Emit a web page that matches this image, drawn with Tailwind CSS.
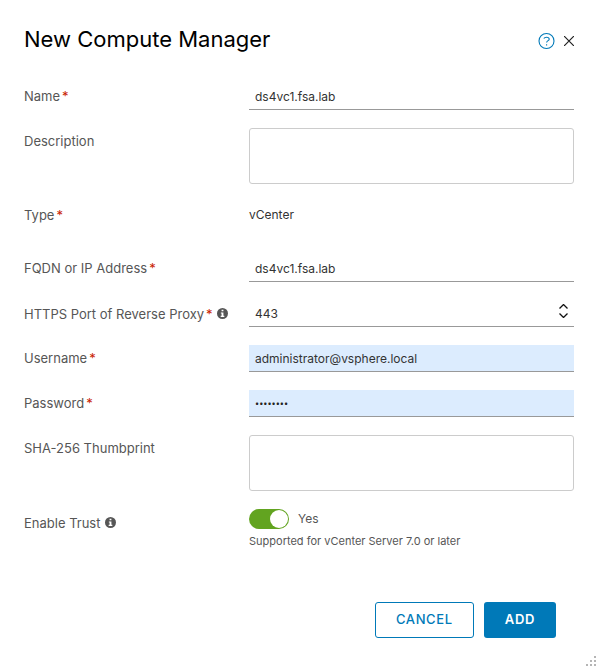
<!DOCTYPE html>
<html lang="en">
<head>
<meta charset="utf-8">
<meta name="viewport" content="width=device-width, initial-scale=1">
<title>New Compute Manager</title>
<script src="https://cdn.jsdelivr.net/npm/@tailwindcss/browser@4"></script>
</head>
<body class="bg-white font-['Inter',sans-serif] text-[13px] text-[#565656]">
<main class="relative flex min-h-screen flex-col px-6 pt-6 pb-[30px]">
  <header class="flex h-[30px] items-center justify-between">
    <h1 class="text-[22px] leading-[30px] text-black">New Compute Manager</h1>
    <div class="flex items-center gap-2 pt-1">
      <button type="button" aria-label="Help" class="text-[#0079b8]">
        <svg class="size-[18px]" viewBox="0 0 18 18" fill="none" stroke="currentColor" stroke-width="1.1"><circle cx="8.5" cy="9" r="7.5"/><path d="M5.8 6.6C6.3 5.7 7.3 5.2 8.5 5.2c1.6 0 2.7.8 2.7 2 0 1.4-2.6 1.6-2.6 3.4M8.6 12.2v1.3"/></svg>
      </button>
      <button type="button" aria-label="Close" class="text-[#222]">
        <svg class="size-[10px]" viewBox="0 0 10 10" fill="none" stroke="currentColor" stroke-width="1.2"><path d="M0 0l10 10M10 0L0 10"/></svg>
      </button>
    </div>
  </header>

  <form class="flex grow flex-col">
    <div class="mt-[29px] grid grid-cols-[225px_1fr] gap-y-[18px] leading-[26px]">
      <label for="name">Name<span class="ml-0.5 text-[#c92100]">*</span></label>
      <input id="name" type="text" value="ds4vc1.fsa.lab" class="h-[27px] w-full border-b border-[#999] px-1.5 text-xs text-[#333] outline-none">

      <label for="desc">Description</label>
      <textarea id="desc" class="block h-14 w-full resize-none rounded-[3px] border border-[#ccc] px-1.5 outline-none"></textarea>

      <div>Type<span class="ml-0.5 text-[#c92100]">*</span></div>
      <div class="pb-[9px] text-xs leading-[26px] text-[#333]">vCenter</div>

      <label for="fqdn">FQDN or IP Address<span class="ml-0.5 text-[#c92100]">*</span></label>
      <input id="fqdn" type="text" value="ds4vc1.fsa.lab" class="h-[27px] w-full border-b border-[#999] px-1.5 text-xs text-[#333] outline-none">

      <div class="flex items-center">
        <label for="port">HTTPS Port of Reverse Proxy<span class="ml-0.5 text-[#c92100]">*</span></label>
        <svg class="ml-1 size-[11px]" viewBox="0 0 12 12" role="img" aria-label="Port information"><circle cx="6" cy="6" r="6" fill="#565656"/><path d="M5 2h2v1.6H5zM4.2 4.8H7v3.7h1v1.2H4V8.5h1V6h-.8z" fill="#fff"/></svg>
      </div>
      <div class="flex h-[27px] items-center border-b border-[#999] pr-1.5">
        <input id="port" type="number" value="443" class="h-full w-full appearance-none px-1.5 text-xs text-[#333] outline-none [&::-webkit-inner-spin-button]:appearance-none">
        <span class="flex flex-col gap-1 pb-1">
          <button type="button" aria-label="Increase port" class="block"><svg class="block h-[5px] w-[9px]" viewBox="0 0 9 5" fill="none" stroke="#111" stroke-width="1.3"><path d="M.5 4.5l4-4 4 4"/></svg></button>
          <button type="button" aria-label="Decrease port" class="block"><svg class="block h-[5px] w-[9px]" viewBox="0 0 9 5" fill="none" stroke="#111" stroke-width="1.3"><path d="M.5.5l4 4 4-4"/></svg></button>
        </span>
      </div>

      <label for="user">Username<span class="ml-0.5 text-[#c92100]">*</span></label>
      <input id="user" type="text" value="administrator@vsphere.local" class="h-[27px] w-full border-b border-[#999] bg-[#dcecfe] px-1.5 text-xs text-[#333] outline-none">

      <label for="pass">Password<span class="ml-0.5 text-[#c92100]">*</span></label>
      <input id="pass" type="password" value="password" class="h-[27px] w-full border-b border-[#999] bg-[#dcecfe] px-1.5 font-['Open_Sans',sans-serif] text-[11px] text-[#222] outline-none">

      <label for="thumb">SHA-256 Thumbprint</label>
      <textarea id="thumb" class="block h-14 w-full resize-none rounded-[3px] border border-[#ccc] px-1.5 outline-none"></textarea>

      <div class="flex h-[27px] items-center">
        <span>Enable Trust</span>
        <svg class="ml-1 size-[11px]" viewBox="0 0 12 12" role="img" aria-label="Trust information"><circle cx="6" cy="6" r="6" fill="#565656"/><path d="M5 2h2v1.6H5zM4.2 4.8H7v3.7h1v1.2H4V8.5h1V6h-.8z" fill="#fff"/></svg>
      </div>
      <div>
        <label class="flex h-5 items-center gap-[9px] text-xs">
          <input type="checkbox" role="switch" aria-label="Enable Trust" checked class="flex h-5 w-10 appearance-none justify-end rounded-full bg-[#62a420] p-px before:size-[18px] before:rounded-full before:bg-white">
          Yes
        </label>
        <p class="text-[11px] leading-6">Supported for vCenter Server 7.0 or later</p>
      </div>
    </div>

    <div class="mt-auto flex justify-end gap-2.5 pr-[18px] text-[13px] tracking-wider">
      <button type="button" class="h-9 rounded-[3px] border border-[#0079b8] px-5 font-medium text-[#0079b8]">CANCEL</button>
      <button type="submit" class="h-9 rounded-[3px] bg-[#0079b8] px-[21px] font-semibold text-white">ADD</button>
    </div>
  </form>
  <svg class="absolute right-0.5 bottom-0.5 size-[10px]" viewBox="0 0 10 10" fill="#b5b5b5" aria-hidden="true"><path d="M8 0h2v2H8zM4 4h2v2H4zM8 4h2v2H8zM0 8h2v2H0zM4 8h2v2H4zM8 8h2v2H8z"/></svg>
</main>
</body>
</html>
